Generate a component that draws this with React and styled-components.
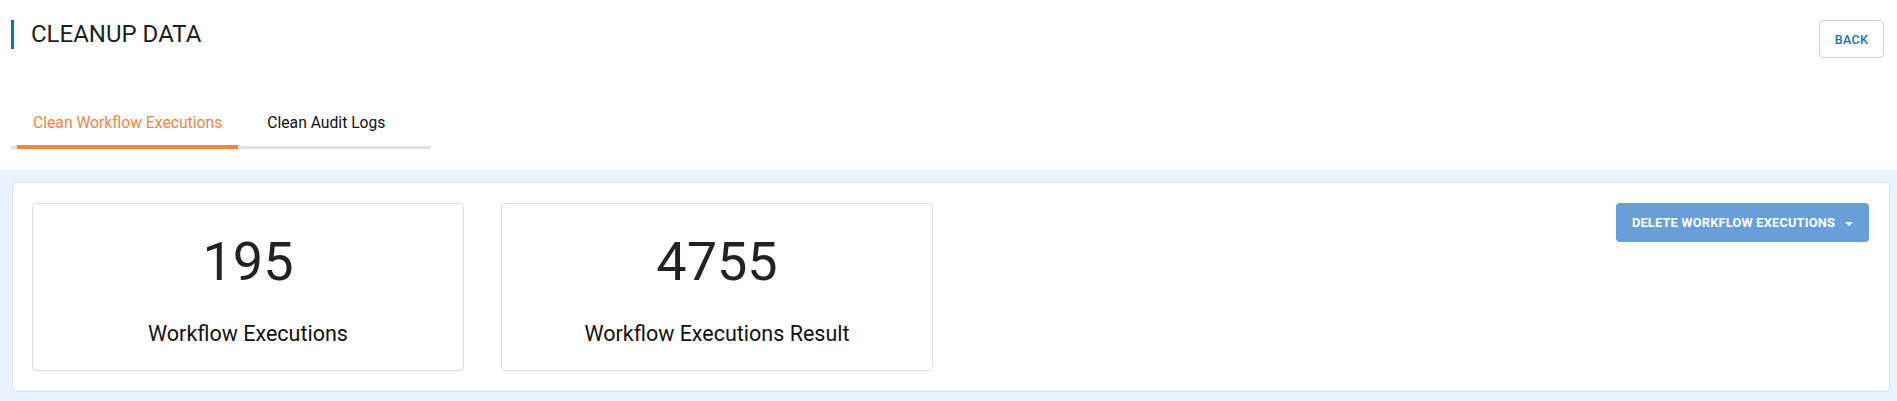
import React, { useState } from 'react'
import styled, { createGlobalStyle } from "styled-components";

const GlobalStyle = createGlobalStyle`
  body {
    margin: 0;
    background: #fff;
    font-family: Roboto, "Liberation Sans", sans-serif;
    color: #212529;
  }
  * { box-sizing: border-box; }
`;

const Header = styled.div`
  display: flex;
  justify-content: space-between;
  align-items: flex-start;
  padding: 20px 13px 0 11px;
`;

const Title = styled.h1`
  margin: 0;
  height: 29px;
  line-height: 29px;
  padding-left: 17px;
  border-left: 3px solid #0b72b9;
  font-size: 24px;
  font-weight: 400;
  color: #1b1f24;
`;

const BackButton = styled.button`
  width: 65px;
  height: 38px;
  background: #fff;
  border: 1px solid #cdd3dc;
  border-radius: 4px;
  color: #1b6ec2;
  font-family: inherit;
  font-size: 12.5px;
  font-weight: 500;
  letter-spacing: 0.3px;
  cursor: pointer;
`;

const TabList = styled.div`
  display: flex;
  gap: 13px;
  width: 420px;
  margin: 42px 0 21px 11px;
  padding-left: 6px;
  border-bottom: 3px solid #dee2e6;
`;

const Tab = styled.button`
  background: none;
  border: none;
  border-bottom: 4px solid ${(p) => (p.active ? "#f4843f" : "transparent")};
  margin-bottom: -3px;
  padding: 13px 16px 12px;
  line-height: 20px;
  font-family: inherit;
  font-size: 15.7px;
  font-weight: 400;
  color: ${(p) => (p.active ? "#f4843f" : "#111")};
  cursor: pointer;
`;

const Content = styled.div`
  background: #e9f3fd;
  padding: 12px 7px 10px 12px;
`;

const Panel = styled.div`
  display: flex;
  justify-content: space-between;
  align-items: flex-start;
  background: #fff;
  border: 1px solid #dde2e8;
  border-radius: 4px;
  padding: 20px 20px 20px 19px;
`;

const Cards = styled.div`
  display: flex;
  gap: 37px;
`;

const StatCard = styled.div`
  width: 432px;
  height: 168px;
  display: flex;
  flex-direction: column;
  align-items: center;
  border: 1px solid #dcdcdc;
  border-radius: 4px;
  padding-top: 31px;
`;

const Count = styled.div`
  font-size: 54px;
  line-height: 54px;
  font-weight: 400;
  color: #222;
`;

const Label = styled.div`
  margin-top: 32px;
  font-size: 21.5px;
  line-height: 26px;
  color: #111;
`;

const DeleteButton = styled.button`
  display: flex;
  align-items: center;
  gap: 10px;
  height: 39px;
  padding: 0 16px;
  background: #689fd8;
  border: none;
  border-radius: 4px;
  color: #fff;
  font-family: inherit;
  font-size: 12.8px;
  font-weight: 700;
  letter-spacing: 0.2px;
  cursor: pointer;
`;

const Caret = styled.span`
  width: 0;
  height: 0;
  border-left: 4px solid transparent;
  border-right: 4px solid transparent;
  border-top: 4px solid #fff;
  margin-top: 2px;
`;

const stats = [
  { id: 1, count: 195, label: "Workflow Executions" },
  { id: 2, count: 4755, label: "Workflow Executions Result" },
];

const App = () => {
  const [tab, setTab] = useState(0);

  return (
    <>
      <GlobalStyle />
      <Header>
        <Title>CLEANUP DATA</Title>
        <BackButton>BACK</BackButton>
      </Header>
      <TabList>
        <Tab active={tab === 0} onClick={() => setTab(0)}>Clean Workflow Executions</Tab>
        <Tab active={tab === 1} onClick={() => setTab(1)}>Clean Audit Logs</Tab>
      </TabList>
      <Content>
        <Panel>
          <Cards>
            {stats.map((s) => (
              <StatCard key={s.id}>
                <Count>{s.count}</Count>
                <Label>{s.label}</Label>
              </StatCard>
            ))}
          </Cards>
          <DeleteButton>
            DELETE WORKFLOW EXECUTIONS
            <Caret />
          </DeleteButton>
        </Panel>
      </Content>
    </>
  );
}

export default App;
